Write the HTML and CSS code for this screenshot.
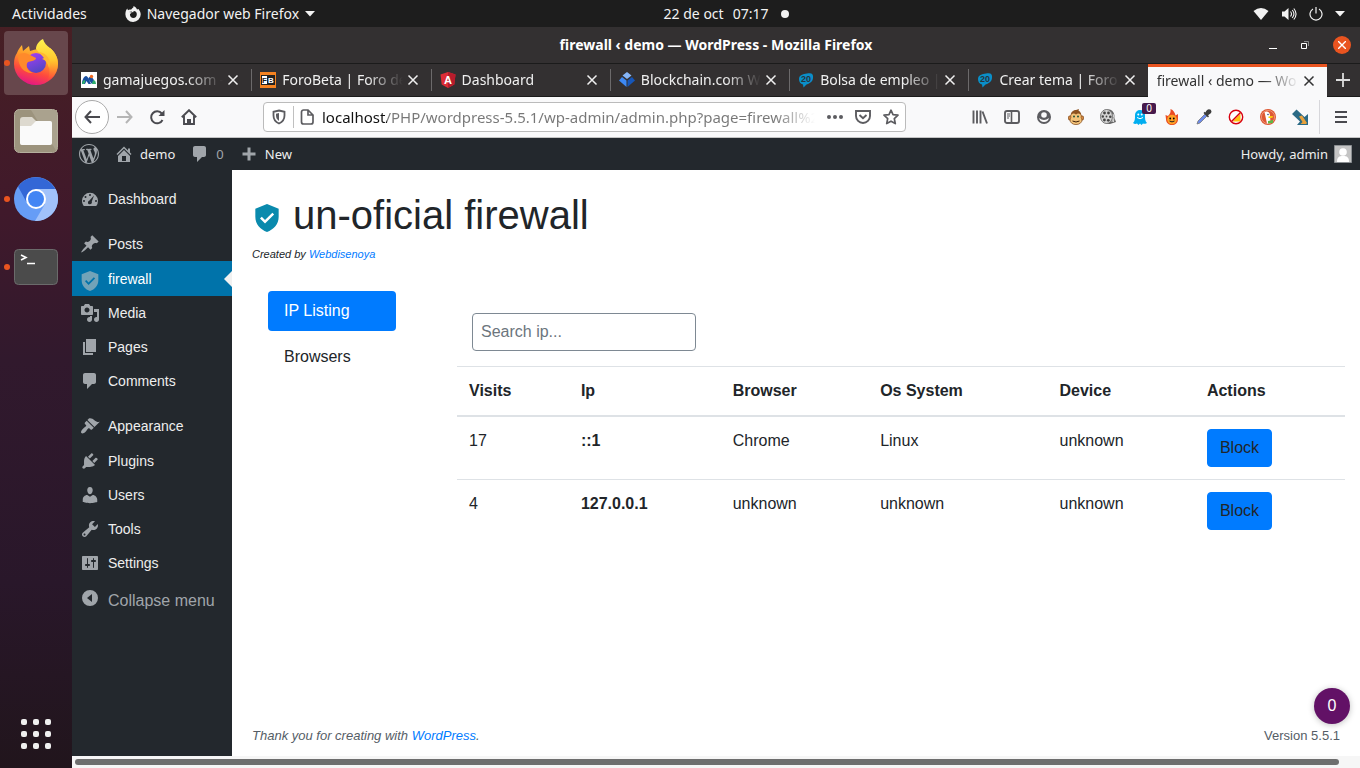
FILE: index.html
```html
<!DOCTYPE html>
<html lang="es">
<head>
<meta charset="utf-8">
<title>firewall ‹ demo — WordPress</title>
<link rel="stylesheet" href="styles.css">
</head>
<body>
<svg class="sprite" aria-hidden="true">
  <symbol id="i-close" viewBox="0 0 12 12"><path d="M1.500 1.500l9 9M10.500 1.500l-9 9" stroke="currentColor" stroke-width="1.500" fill="none"/></symbol>
  <symbol id="i-foro" viewBox="0 0 16 16"><path d="M1 7C1 3 5 2 9 1.500C14 .5 15.500 2 15 6C14.800 9 13 11 8.500 12.500L5.500 15.500L5 12.500C2.500 12 1 10 1 7z" fill="#0a8fc9"/><text class="fav-text" x="3" y="10" font-size="9" fill="#27343d">20</text></symbol>
  <symbol id="i-comment" viewBox="0 0 20 20"><path d="M5 2h9c1.100 0 2 .9 2 2v7c0 1.100-.9 2-2 2h-2l-5 5v-5H5c-1.100 0-2-.9-2-2V4c0-1.100.9-2 2-2z"/></symbol>
  <symbol id="i-shield" viewBox="0 0 24 24"><path fill-rule="evenodd" d="M12 0L2 4V11c0 6.300 4.200 11 10 13 5.800-2 10-6.700 10-13V4zM10.300 16.700L6 12.400l1.500-1.500 2.800 2.800L16.600 7.400l1.500 1.500z"/></symbol>
</svg>

<header class="topbar">
  <div class="topbar-left">
    <button class="plain">Actividades</button>
    <button class="plain app-menu">
      <svg width="16" height="16" viewBox="0 0 16 16"><path fill="currentColor" fill-rule="evenodd" d="M8.500 0c2 1 3 2 3.500 3.500L13.500 3c1.500 2 2.200 3.500 2.200 5.500A7.600 7.600 0 0 1 8 16 7.600 7.600 0 0 1 .4 8.400C.4 6 1 4 2.200 2.500L3 4.200C4 3.500 5 3.400 6 3.700L7.500 2C8.500 1.600 8.500.8 8.500 0zM4 6l3 .5-2 1.500c-.2 2.500 1.300 4 3.300 4 2.200 0 3.500-1.600 3.500-3.700 0-1.700-1-3.300-3-3.300L8 6.500 6.500 5.500z"/></svg>
      <span>Navegador web Firefox</span>
      <svg width="10" height="6" viewBox="0 0 10 6"><path d="M0 0h10L5 5.500z" fill="currentColor"/></svg>
    </button>
  </div>
  <button class="plain clock"><span>22 de oct</span><span>07:17</span><span class="notice-dot"></span></button>
  <div class="topbar-right">
    <svg width="16" height="14" viewBox="0 0 16 14"><path d="M.5 4Q8-2 15.500 4L8 13z" fill="currentColor"/></svg>
    <svg width="16" height="14" viewBox="0 0 16 14"><path d="M1 4.500h2.500L7.500 1v12L3.500 9.500H1z" fill="currentColor"/><path d="M9.500 4.500q2 2.500 0 5M11.200 3q3.500 4 0 8M12.800 1.500q4.500 5.500 0 11" fill="none" stroke="currentColor" stroke-width="1.100"/></svg>
    <svg width="14" height="14" viewBox="0 0 14 14"><path d="M4 1.900a6 6 0 1 0 6 0M7 0v6.500" fill="none" stroke="currentColor" stroke-width="1.200"/></svg>
    <svg width="10" height="6" viewBox="0 0 10 6"><path d="M0 0h10L5 5.500z" fill="currentColor"/></svg>
  </div>
</header>

<div class="desktop">
  <nav class="dock" aria-label="Dock">
    <button class="dock-item running focused" aria-label="Firefox">
      <svg width="48" height="48" viewBox="0 0 48 48">
        <defs>
          <linearGradient id="ffa" x1=".7" y1="0" x2=".35" y2="1"><stop offset="0" stop-color="#ffd23a"/><stop offset=".35" stop-color="#ff9a2a"/><stop offset=".68" stop-color="#ff4a3d"/><stop offset="1" stop-color="#e31587"/></linearGradient>
          <linearGradient id="ffb" x1=".3" y1="0" x2=".7" y2="1"><stop offset="0" stop-color="#a13df2"/><stop offset="1" stop-color="#4d48c0"/></linearGradient>
          <linearGradient id="ffc" x1="0" y1="0" x2="0" y2="1"><stop offset="0" stop-color="#fff44f"/><stop offset=".5" stop-color="#ffc62e"/><stop offset="1" stop-color="#ff6a2e" stop-opacity="0"/></linearGradient>
        </defs>
        <path d="M5 14C6 11 8 8 10 6l1 6 6-5 1 5q8-3 20-3C43 13 46 18 46 25A22 21 0 1 1 2 25C2 20 3 17 5 14z" fill="url(#ffa)"/>
        <path d="M24 10c0-4 3-8 7-10 1 4 4 7 7 9 5 4 8 10 8 16 0 8-5 15-12 18 5-7 4-14 1-19-2-4-6-8-11-14z" fill="url(#ffc)"/>
        <circle cx="24" cy="24" r="10" fill="url(#ffb)"/>
        <path d="M6 17c4-4 7-3 10-2l8 4q0 2-4 3l-4 1c-3 3-1 9 5 11-8 1-15-6-15-17z" fill="#ff8a2b"/>
        <path d="M27 13c8 1 13 8 10 16-1-5-3-8-7-9l2-1z" fill="#ffb931"/>
      </svg>
    </button>
    <button class="dock-item" aria-label="Archivos">
      <svg width="44" height="44" viewBox="0 0 44 44"><rect x=".5" y=".5" width="43" height="43" rx="5" fill="#9c937d" stroke="#b5af9d"/><path d="M17 1h26v42z" fill="#aaa28e"/><path d="M6 11a3 3 0 0 1 3-3h9l4 4h13a3 3 0 0 1 3 3v18a3 3 0 0 1-3 3H9a3 3 0 0 1-3-3z" fill="#ddd9cf"/><path d="M6 17h11l5-5h14a2 2 0 0 1 2 2v20a2 2 0 0 1-2 2H8a2 2 0 0 1-2-2z" fill="#fafafa"/></svg>
    </button>
    <button class="dock-item running" aria-label="Chromium">
      <svg width="44" height="44" viewBox="0 0 44 44"><circle cx="22" cy="22" r="22" fill="#669df6"/><path d="M4 9.500A22 22 0 0 1 40.500 10.500L41 12H22L12.500 25z" fill="#3367d6"/><path d="M22 12h19.600A22 22 0 0 1 21 44l10-17z" fill="#a1c2fa"/><circle cx="22" cy="22" r="10" fill="#fff"/><circle cx="22" cy="22" r="8" fill="#4285f4"/></svg>
    </button>
    <button class="dock-item running" aria-label="Terminal">
      <svg width="44" height="36" viewBox="0 0 44 36"><rect x=".5" y=".5" width="43" height="35" rx="4" fill="#4b4b4b" stroke="#6b6b6b"/><path d="M7 6l5 2.500L7 11M13 14.500h8" stroke="#fff" stroke-width="1.600" fill="none"/></svg>
    </button>
    <button class="dock-item show-apps" aria-label="Mostrar aplicaciones">
      <svg width="30" height="30" viewBox="0 0 30 30" fill="#efefef"><g id="dots"><rect width="6" height="6" rx="2"/><rect x="12" width="6" height="6" rx="2"/><rect x="24" width="6" height="6" rx="2"/></g><use href="#dots" y="12"/><use href="#dots" y="24"/></svg>
    </button>
  </nav>

  <div class="window">
    <div class="titlebar">
      <div class="title">firewall ‹ demo — WordPress - Mozilla Firefox</div>
      <div class="window-buttons">
        <button class="plain" aria-label="Minimizar"><svg width="8" height="8"><path d="M0 7.500h8" stroke="#fff"/></svg></button>
        <button class="plain" aria-label="Restaurar"><svg width="8" height="8"><path d="M.5 2.500h5v5h-5z" fill="none" stroke="#fff"/><path d="M3 .5h4.500V5" fill="none" stroke="#888"/></svg></button>
        <button class="plain close-window" aria-label="Cerrar"><svg width="8" height="8"><path d="M0 0l8 8M8 0L0 8" stroke="#fff" stroke-width="1.400"/></svg></button>
      </div>
    </div>

    <div class="tabs">
      <div class="tab"><button class="plain tab-label"><svg class="fav" viewBox="0 0 16 16"><path fill="#fff" d="M0 0h16v16H0z"/><path d="M1 12C1 8 3 4 5 4s3 4 5 8H7.500L5.500 9 4 12z" fill="#1a4fa0"/><path d="M7 7C9 3 12 5 13 9l-2 3z" fill="#1a4fa0"/><circle cx="10.500" cy="4.500" r="1.700" fill="#f26b21"/><path d="M1 12q.5-4 3-4 1 2-1 4zM11 12q0-3 2-4 2 1 2 4z" fill="#2fae6d"/></svg><span>gamajuegos.com -</span></button><button class="plain tab-close" aria-label="Cerrar pestaña"><svg><use href="#i-close"/></svg></button></div>
      <div class="tab"><button class="plain tab-label"><svg class="fav" viewBox="0 0 16 16"><path fill="#f58220" d="M0 0h16v16H0z"/><path fill="#222" d="M1 3h14v10H1z"/><path fill="#fff" d="M2 4h5v8H2z"/><text class="fav-text" x="2" y="11" font-size="8" fill="#222">F</text><text class="fav-text" x="8" y="11" font-size="8" fill="#fff">B</text></svg><span>ForoBeta | Foro de</span></button><button class="plain tab-close" aria-label="Cerrar pestaña"><svg><use href="#i-close"/></svg></button></div>
      <div class="tab"><button class="plain tab-label"><svg class="fav" viewBox="0 0 16 16"><path fill="#dd2c36" d="M8 0l7.500 2.600-1.200 10L8 16l-6.300-3.400-1.200-10z"/><path fill="#b71c2c" d="M8 0l7.500 2.600-1.200 10L8 16z"/><text class="fav-text" x="8" y="12" text-anchor="middle" font-size="11" fill="#fff">A</text></svg><span>Dashboard</span></button><button class="plain tab-close" aria-label="Cerrar pestaña"><svg><use href="#i-close"/></svg></button></div>
      <div class="tab"><button class="plain tab-label"><svg class="fav" viewBox="0 0 16 16"><path fill="#85b5f8" d="M8 0l4.500 3.500L8 7 3.500 3.500z"/><path fill="#3d89f5" d="M3 5l4.500 3.500V15L0 8.500z"/><path fill="#1656b9" d="M13 5l3 3.500-7.500 6.500V8.500z"/></svg><span>Blockchain.com W</span></button><button class="plain tab-close" aria-label="Cerrar pestaña"><svg><use href="#i-close"/></svg></button></div>
      <div class="tab"><button class="plain tab-label"><svg class="fav"><use href="#i-foro"/></svg><span>Bolsa de empleo |</span></button><button class="plain tab-close" aria-label="Cerrar pestaña"><svg><use href="#i-close"/></svg></button></div>
      <div class="tab"><button class="plain tab-label"><svg class="fav"><use href="#i-foro"/></svg><span>Crear tema | Foro</span></button><button class="plain tab-close" aria-label="Cerrar pestaña"><svg><use href="#i-close"/></svg></button></div>
      <div class="tab active"><button class="plain tab-label"><span>firewall ‹ demo — Wo</span></button><button class="plain tab-close" aria-label="Cerrar pestaña"><svg><use href="#i-close"/></svg></button></div>
      <button class="plain new-tab" aria-label="Nueva pestaña"><svg width="14" height="14"><path d="M7 0v14M0 7h14" stroke="#ddd" stroke-width="1.800"/></svg></button>
    </div>

    <div class="toolbar">
      <div class="nav-buttons">
        <button class="plain back" aria-label="Atrás"><svg width="16" height="16" viewBox="0 0 16 16" fill="none" stroke="#4a4a4f" stroke-width="2"><path d="M7 2L1.500 8 7 14M1.500 8H16"/></svg></button>
        <button class="plain tool" aria-label="Adelante"><svg width="16" height="16" viewBox="0 0 16 16" fill="none" stroke="#b5b5b5" stroke-width="2"><path d="M9 2l5.500 6L9 14M14.500 8H0"/></svg></button>
        <button class="plain tool" aria-label="Recargar"><svg width="16" height="16" viewBox="0 0 16 16"><path d="M12.800 4.500A6 6 0 1 0 13.500 11" fill="none" stroke="#4a4a4f" stroke-width="2"/><path d="M15.500 1v6h-6z" fill="#4a4a4f"/></svg></button>
        <button class="plain tool" aria-label="Inicio"><svg width="16" height="16" viewBox="0 0 16 16"><path d="M.8 8.300L8 1.200l7.200 7.100M3 7v8h10V7" fill="none" stroke="#4a4a4f" stroke-width="1.900"/><path d="M6 15v-5h4v5z" fill="#4a4a4f"/></svg></button>
      </div>
      <div class="urlbar">
        <button class="plain" aria-label="Protección"><svg width="14" height="16" viewBox="0 0 14 16"><path d="M7 1.500l5.500 1.300v3.700c0 4-2 6.500-5.500 8-3.500-1.500-5.500-4-5.500-8V2.800z" fill="none" stroke="#5c5c60" stroke-width="1.800"/><path d="M7 4v8c-2-1.500-3-3-3-5.500V4.700z" fill="#5c5c60"/></svg></button>
        <span class="url-sep"></span>
        <svg width="14" height="16" viewBox="0 0 14 16"><path d="M1.500 3A2 2 0 0 1 3.500 1H8l5 5v7a2 2 0 0 1-2 2H3.500a2 2 0 0 1-2-2zM8 1v5h5" fill="none" stroke="#5c5c60" stroke-width="1.700"/></svg>
        <input class="url" type="text" aria-label="Dirección" value="localhost/PHP/wordpress-5.5.1/wp-admin/admin.php?page=firewall%2">
        <button class="plain" aria-label="Más acciones"><svg width="16" height="16" fill="#5c5c60"><circle cx="2" cy="8" r="2"/><circle cx="8" cy="8" r="2"/><circle cx="14" cy="8" r="2"/></svg></button>
        <button class="plain" aria-label="Pocket"><svg width="16" height="16" viewBox="0 0 16 16" fill="none" stroke="#5c5c60" stroke-width="1.900"><path d="M1 2h14v5a7 7 0 0 1-14 0zM4.500 6L8 9.300 11.500 6"/></svg></button>
        <button class="plain" aria-label="Marcador"><svg width="16" height="16" viewBox="0 0 16 16"><path d="M8 1.200l2 4.500 5 .5-3.700 3.400 1 5L8 12.200l-4.300 2.400 1-5L1 6.200l5-.5z" fill="none" stroke="#5c5c60" stroke-width="1.700" stroke-linejoin="round"/></svg></button>
      </div>
      <div class="extensions">
        <button class="plain tool" aria-label="Biblioteca"><svg width="16" height="16" stroke="#5c5c60" stroke-width="1.900"><path d="M1.500 1.500v13M5 1.500v13M8.500 1.500v13M10.500 2.500l4.500 12"/></svg></button>
        <button class="plain tool" aria-label="Barra lateral"><svg width="16" height="16" fill="none" stroke="#5c5c60"><rect x="1" y="2" width="14" height="12" rx="2" stroke-width="1.900"/><path d="M7.500 2v12" stroke-width="1.600"/><path d="M3 5h3M3 7h3M3 9h2"/></svg></button>
        <button class="plain tool" aria-label="Cuenta"><svg width="16" height="16"><circle cx="8" cy="8" r="7" fill="#5c5c60"/><circle cx="8" cy="6" r="2.800" fill="#f9f9fa"/><path d="M3 9q5 4 10 0-1 4-5 4t-5-4z" fill="#f9f9fa"/></svg></button>
        <button class="plain tool" aria-label="Greasemonkey"><svg width="16" height="16"><circle cx="2.500" cy="9" r="2.300" fill="#d58b45" stroke="#7d4312" stroke-width=".7"/><circle cx="13.500" cy="9" r="2.300" fill="#d58b45" stroke="#7d4312" stroke-width=".7"/><path d="M2.500 8C2.500 3 5 1 8 1l3-1-.5 1.500C13 3 13.500 5 13.500 8z" fill="#8d5220"/><ellipse cx="8" cy="11" rx="6" ry="4.600" fill="#f4c47b" stroke="#7d4312" stroke-width=".7"/><circle cx="5.700" cy="7" r="2.600" fill="#f4c47b"/><circle cx="10.300" cy="7" r="2.600" fill="#f4c47b"/><circle cx="6" cy="7.500" r="1" fill="#24543a"/><circle cx="10" cy="7.500" r="1" fill="#24543a"/><path d="M4.500 12q3.500 2 7 0" fill="none" stroke="#3c1d05"/></svg></button>
        <button class="plain tool" aria-label="Vídeo"><svg width="16" height="16"><path d="M6 .5h4q5 2 4.500 8.500l1.500 4-6 2H6z" fill="#666"/><path d="M11 3q3 4 1 10M13 5q1.500 3 .5 8" stroke="#ddd" fill="none"/><ellipse cx="6.500" cy="7.500" rx="6" ry="7" fill="#d5d5d5" stroke="#777"/><g fill="#444"><circle cx="4.500" cy="4" r="1.400"/><circle cx="8.500" cy="4" r="1.400"/><circle cx="10.300" cy="7.700" r="1.300"/><circle cx="8.300" cy="11.300" r="1.400"/><circle cx="4.400" cy="11" r="1.400"/><circle cx="2.800" cy="7.500" r="1.200"/><circle cx="6.500" cy="7.500" r=".9"/></g></svg></button>
        <button class="plain tool ghostery" aria-label="Ghostery"><svg width="16" height="16"><path d="M3 6a5 5 0 0 1 10 0c0 4 0 6 2 8-2 1-3 1-4 .5L9.500 16 8 14.500 6.500 16 5 14.500q-2 1-4-.5C3 12 3 10 3 6z" fill="#00aef0"/><circle cx="6.300" cy="5.500" r="1" fill="#fff"/><circle cx="9.700" cy="5.500" r="1" fill="#fff"/><path d="M5 8.500q3 2.500 6 0" fill="none" stroke="#fff"/></svg><span class="count">0</span></button>
        <button class="plain tool" aria-label="Hot"><svg width="16" height="16"><path d="M2 10l-.5-4L4 7c2-2 3-4 2.500-7 3 1 4.500 4 5 6.500L14 5v5c0 4-3 6-6 6s-6-2-6-6z" fill="#ea4b22"/><circle cx="8" cy="10.500" r="4.800" fill="#ffa126"/><circle cx="6.200" cy="9.500" r=".9"/><circle cx="9.800" cy="9.500" r=".9"/><path d="M5.500 12q2.500 1.800 5 0" fill="none" stroke="#222"/></svg></button>
        <button class="plain tool" aria-label="Cuentagotas"><svg width="16" height="16"><path d="M9 5l2 2-7 7-3 1 1-3z" fill="#6c8bec" stroke="#777" stroke-width=".8"/><path d="M7.500 4l4.500 4.500 1-1.200-1-1c2-1 3.500-2.500 3.500-3.700A2.500 2.500 0 0 0 13 .3c-1.500 0-3 1.700-3.500 3.300l-.8-.8z" fill="#3d3d3d"/></svg></button>
        <button class="plain tool" aria-label="Bloqueador"><svg width="16" height="16"><circle cx="8" cy="8" r="6.700" fill="#fff"/><path d="M4.500 12.500L12.500 4.500v8z" fill="#ffc20e"/><circle cx="8" cy="8" r="6.700" fill="none" stroke="#d8000f" stroke-width="1.400"/><path d="M3.500 12.500l9-9" stroke="#d8000f" stroke-width="1.400"/></svg></button>
        <button class="plain tool" aria-label="DuckDuckGo"><svg width="16" height="16"><circle cx="8" cy="8" r="8" fill="#de5833"/><circle cx="8" cy="8" r="6.600" fill="none" stroke="#f6b7a3" stroke-width=".6"/><path d="M4.500 3C7 1.500 10 3 10 6.500L10.500 14 7 14.500z" fill="#fff"/><path d="M8.500 7.500q3-1 5 0-1 2-5 1.500z" fill="#fcd20a"/><path d="M8 12l5-1v3l-5 .5z" fill="#5fb947"/><circle cx="8" cy="5.500" r=".8" fill="#2d4f8e"/></svg></button>
        <button class="plain tool" aria-label="Descargas"><svg width="16" height="16"><path d="M4.500 .5L12.500 8 16 5v11H5L8 12.500 0 5z" fill="#2b6a85"/><path d="M7 7.500l3-1 5 7.500-1 1H8.500l2-2z" fill="#e9a13b"/></svg></button>
        <span class="tool-sep"></span>
        <button class="plain menu-button" aria-label="Menú"><svg width="12" height="14"><path d="M0 2h12M0 7h12M0 12h12" stroke="#4a4a4f" stroke-width="2"/></svg></button>
      </div>
    </div>

    <div class="adminbar">
      <a href="#" class="wp-logo" aria-label="WordPress"><svg class="dash" viewBox="0 0 20 20"><path d="M20 10c0-5.510-4.490-10-10-10C4.480 0 0 4.490 0 10c0 5.520 4.480 10 10 10 5.510 0 10-4.480 10-10zM7.780 15.370L4.370 6.220c.55-.02 1.170-.08 1.170-.08.5-.06.44-1.130-.06-1.110 0 0-1.450.11-2.370.11-.18 0-.37 0-.58-.01C4.120 2.690 6.870 1.110 10 1.110c2.330 0 4.450.87 6.050 2.340-.68-.11-1.650.39-1.650 1.580 0 .74.45 1.360.9 2.100.35.61.55 1.360.55 2.460 0 1.490-1.400 5-1.400 5l-3.030-8.370c.54-.02.82-.17.82-.17.5-.05.44-1.250-.06-1.220 0 0-1.440.12-2.380.12-.87 0-2.330-.12-2.330-.12-.5-.03-.56 1.200-.06 1.220l.92.08 1.260 3.410zM17.410 10c.24-.64.74-1.870.43-4.250.7 1.290 1.050 2.710 1.050 4.250 0 3.290-1.730 6.240-4.400 7.780.97-2.590 1.940-5.200 2.920-7.780zM6.100 18.090C3.120 16.650 1.110 13.530 1.110 10c0-1.300.23-2.480.72-3.590C3.250 10.300 4.670 14.200 6.100 18.090zm4.030-6.630l2.580 6.980c-.86.29-1.760.45-2.710.45-.79 0-1.570-.11-2.290-.33.81-2.380 1.620-4.740 2.420-7.100z"/></svg></a>
      <a href="#"><svg class="dash" viewBox="0 0 20 20"><path d="M16 8.500l1.530 1.530-1.060 1.060L10 4.600l-6.470 6.490-1.060-1.060L10 2.500l4 4v-2h2v4zm-6-2.460l6 5.990V18H4v-5.970zM12 17v-5H8v5h4z"/></svg>demo</a>
      <a href="#" class="muted"><svg class="dash"><use href="#i-comment"/></svg>0</a>
      <a href="#"><svg class="dash" viewBox="0 0 20 20"><path d="M8.500 3.500h3v5h5v3h-5v5h-3v-5h-5v-3h5z"/></svg>New</a>
      <a href="#" class="account">Howdy, admin<svg width="18" height="18" viewBox="0 0 18 18"><path fill="#c4c4c4" stroke="#8b8f92" d="M.5.5h17v17H.5z"/><circle cx="9" cy="7" r="3.800" fill="#fff"/><path d="M3 17c0-5 2-6 6-6s6 1 6 6z" fill="#fff"/></svg></a>
    </div>

    <div class="admin">
      <nav class="side" aria-label="Menú principal">
        <a href="#"><svg class="dash" viewBox="0 0 20 20"><path fill-rule="evenodd" d="M3.760 17h12.480A8 8 0 0 0 18 11.800 8 8 0 0 0 2 11.800C2 13.760 2.660 15.550 3.760 17zM10 5a1 1 0 1 1 0 2 1 1 0 0 1 0-2zM5.500 7a1 1 0 1 1 0 2 1 1 0 0 1 0-2zM4 11a1 1 0 1 1 0 2 1 1 0 0 1 0-2zM16 11a1 1 0 1 1 0 2 1 1 0 0 1 0-2zM14 6.500l-2.200 6c.4 1.700-.5 2.800-1.800 2.800-2.600 0-2.500-2.900-.8-3.600z"/></svg>Dashboard</a>
        <hr>
        <a href="#"><svg class="dash" viewBox="0 0 20 20"><path d="M10.440 3.020l1.820-1.820 6.360 6.350-1.830 1.820c-1.050-.68-2.480-.57-3.410.36l-.75.75c-.92.93-1.040 2.350-.35 3.410l-1.830 1.820-2.410-2.410-2.800 2.790c-.42.42-3.380 2.710-3.800 2.290s1.860-3.390 2.280-3.810l2.790-2.790L4.100 9.360l1.830-1.820c1.050.69 2.480.57 3.400-.36l.75-.75c.93-.92 1.050-2.350.36-3.410z"/></svg>Posts</a>
        <a href="#" class="current" aria-current="page"><svg class="dash shield"><use href="#i-shield"/></svg>firewall</a>
        <a href="#"><svg class="dash" viewBox="0 0 20 20"><path d="M13 11V4c0-.55-.45-1-1-1h-1.670L9 1H5L3.670 3H2c-.55 0-1 .45-1 1v7c0 .55.45 1 1 1h10c.55 0 1-.45 1-1zM7 4.500c1.380 0 2.500 1.120 2.500 2.500S8.380 9.500 7 9.500 4.500 8.380 4.500 7 5.620 4.500 7 4.500zM14 6h5v10.500c0 1.380-1.120 2.500-2.500 2.500S14 17.880 14 16.500s1.120-2.500 2.500-2.500c.17 0 .34.02.5.05V9h-3V6zm-4 8.050V13h2v3.500c0 1.380-1.120 2.500-2.500 2.500S7 17.880 7 16.500 8.120 14 9.500 14c.17 0 .34.02.5.05z"/></svg>Media</a>
        <a href="#"><svg class="dash" viewBox="0 0 20 20"><path d="M6 15V2h10v13H6zm-1 1h8v2H3V5h2v11z"/></svg>Pages</a>
        <a href="#"><svg class="dash"><use href="#i-comment"/></svg>Comments</a>
        <hr>
        <a href="#"><svg class="dash" viewBox="0 0 20 20"><path d="M14.480 11.060L7.410 3.990l1.500-1.500c.5-.56 2.300-.47 3.510.32 1.210.8 1.430 1.280 2.910 2.100 1.180.64 2.450 1.260 4.450.85zm-.71.71L6.700 4.700 4.930 6.470c-.39.39-.39 1.020 0 1.410l1.060 1.060c.39.39.39 1.030 0 1.420-.6.6-1.430 1.110-2.210 1.690-.35.26-.7.53-1.010.84C1.430 14.230.4 16.080 1.400 17.070c.99 1 2.840-.03 4.180-1.360.31-.31.58-.66.85-1.020.57-.78 1.080-1.610 1.690-2.210.39-.39 1.020-.39 1.410 0l1.060 1.060c.39.39 1.020.39 1.410 0z"/></svg>Appearance</a>
        <a href="#" class="tall"><svg class="dash" viewBox="0 0 20 20"><path d="M13.110 4.360L9.870 7.600 8 5.730l3.240-3.240c.35-.34 1.050-.2 1.560.32.52.51.66 1.210.31 1.550zm-8 1.770l.91-1.120 9.010 9.010-1.190.84c-.71.71-2.630 1.160-3.820 1.160H6.140L4.900 17.260c-.59.59-1.540.59-2.120 0-.59-.58-.59-1.530 0-2.120l1.240-1.240v-3.880c0-1.130.4-3.190 1.090-3.890zm7.260 3.970l3.240-3.240c.34-.35 1.040-.21 1.550.31.52.51.66 1.210.31 1.550l-3.240 3.250z"/></svg>Plugins</a>
        <a href="#"><svg class="dash" viewBox="0 0 20 20"><path d="M10 9.250c-2.270 0-2.730-3.440-2.730-3.440C7 4.020 7.820 2 9.970 2c2.160 0 2.980 2.020 2.710 3.810 0 0-.41 3.440-2.680 3.440zm0 2.570L12.720 10c2.390 0 4.520 2.330 4.520 4.530v2.490s-3.650 1.130-7.240 1.130c-3.650 0-7.240-1.130-7.240-1.130v-2.490c0-2.250 1.940-4.480 4.470-4.480z"/></svg>Users</a>
        <a href="#"><svg class="dash" viewBox="0 0 20 20"><path d="M16.680 9.770c-1.340 1.340-3.300 1.670-4.950.99l-5.410 6.520c-.99.99-2.590.99-3.580 0s-.99-2.590 0-3.570l6.520-5.420c-.68-1.650-.35-3.610.99-4.950 1.280-1.280 3.120-1.620 4.720-1.060l-2.890 2.890 2.820 2.820 2.860-2.870c.53 1.580.18 3.390-1.080 4.650zM3.810 16.210c.4.39 1.040.39 1.430 0 .4-.4.4-1.040 0-1.430-.39-.4-1.030-.4-1.430 0-.39.39-.39 1.030 0 1.430z"/></svg>Tools</a>
        <a href="#"><svg class="dash" viewBox="0 0 20 20"><path d="M18 16V4c0-.55-.45-1-1-1H3c-.55 0-1 .45-1 1v12c0 .55.45 1 1 1h14c.55 0 1-.45 1-1zM8 11h1c.55 0 1 .45 1 1s-.45 1-1 1H8v1.500c0 .28-.22.5-.5.5s-.5-.22-.5-.5V13H6c-.55 0-1-.45-1-1s.45-1 1-1h1V5.500c0-.28.22-.5.5-.5s.5.22.5.5V11zm5-2h-1c-.55 0-1-.45-1-1s.45-1 1-1h1V5.500c0-.28.22-.5.5-.5s.5.22.5.5V7h1c.55 0 1 .45 1 1s-.45 1-1 1h-1v5.500c0 .28-.22.5-.5.5s-.5-.22-.5-.5V9z"/></svg>Settings</a>
        <button class="plain collapse"><svg class="dash" viewBox="0 0 20 20"><path fill-rule="evenodd" d="M10 2a8 8 0 1 1 0 16 8 8 0 0 1 0-16zm2 4v8l-5-4z"/></svg>Collapse menu</button>
      </nav>

      <main class="content">
        <h1><svg width="28" height="28" viewBox="0 0 24 24"><use href="#i-shield"/></svg>un-oficial firewall</h1>
        <p class="byline">Created by <a href="#">Webdisenoya</a></p>
        <div class="panel">
          <nav class="pills" aria-label="Secciones">
            <a href="#" class="on">IP Listing</a>
            <a href="#">Browsers</a>
          </nav>
          <section class="listing">
            <input class="search" type="text" placeholder="Search ip..." aria-label="Search ip">
            <table>
              <thead><tr><th class="c-visits">Visits</th><th class="c-ip">Ip</th><th class="c-browser">Browser</th><th class="c-os">Os System</th><th class="c-device">Device</th><th>Actions</th></tr></thead>
              <tbody>
                <tr><td>17</td><th>::1</th><td>Chrome</td><td>Linux</td><td>unknown</td><td><button class="block">Block</button></td></tr>
                <tr><td>4</td><th>127.0.0.1</th><td>unknown</td><td>unknown</td><td>unknown</td><td><button class="block">Block</button></td></tr>
              </tbody>
            </table>
          </section>
        </div>
        <footer class="foot">
          <p><em>Thank you for creating with <a href="#">WordPress</a>.</em></p>
          <p>Version 5.5.1</p>
        </footer>
        <button class="bubble">0</button>
      </main>
    </div>
    <div class="scrollbar"><div class="thumb"></div></div>
  </div>
</div>
</body>
</html>
```
FILE: styles.css
```css
* { box-sizing: border-box; }

body {
  margin: 0;
  min-height: 100vh;
  display: flex;
  flex-direction: column;
  font-family: "Liberation Sans", Arial, sans-serif;
  font-size: 16px;
  line-height: 24px;
  color: #212529;
}

p, h1 { margin: 0; }
a { color: #007bff; text-decoration: none; }
svg { flex: none; }
.sprite { position: absolute; width: 0; height: 0; }

.plain {
  display: flex;
  align-items: center;
  justify-content: center;
  padding: 0;
  border: 0;
  background: none;
  color: inherit;
  font: inherit;
}

/* System bar */
.topbar {
  display: grid;
  grid-template-columns: 1fr auto 1fr;
  align-items: center;
  height: 27px;
  padding: 0 15px 0 12px;
  background: #1d1d1d;
  color: #f2f2f2;
  font: 14px/20px "Noto Sans", sans-serif;
}
.topbar-left, .topbar-right { display: flex; align-items: center; }
.topbar-left { gap: 38px; }
.topbar-right { gap: 12px; justify-content: flex-end; }
.app-menu { gap: 6px; }
.clock { gap: 9px; padding-left: 96px; }
.notice-dot { width: 8px; height: 8px; margin-left: 4px; border-radius: 50%; background: #f2f2f2; }

.desktop { flex: 1; display: flex; }

/* Dock */
.dock {
  flex: none;
  display: flex;
  flex-direction: column;
  align-items: center;
  gap: 4px;
  width: 72px;
  padding: 4px 0 2px;
  background: linear-gradient(#471f24, #40192b 25%, #31192d 45%, #29172a 75%, #21151c);
}
.dock-item {
  position: relative;
  display: flex;
  align-items: center;
  justify-content: center;
  width: 64px;
  height: 64px;
  padding: 0;
  border: 0;
  border-radius: 4px;
  background: none;
}
.focused { background: #67474c; }
.running::before {
  content: "";
  position: absolute;
  left: 0;
  top: 29px;
  width: 6px;
  height: 6px;
  border-radius: 50%;
  background: #e95420;
}
.show-apps { margin-top: auto; }

/* Browser window */
.window { flex: 1; min-width: 0; display: flex; flex-direction: column; }
.titlebar {
  display: grid;
  grid-template-columns: 1fr auto 1fr;
  align-items: center;
  height: 37px;
  border-bottom: 1px solid #1b1b1b;
  background: #333031;
  color: #fff;
  font: 700 14px/20px "Noto Sans", sans-serif;
}
.title { grid-column: 2; }
.window-buttons { display: flex; justify-content: flex-end; align-items: center; gap: 24px; padding-right: 9px; }
.window-buttons .close-window { width: 18px; height: 18px; border-radius: 50%; background: #e95420; }

.tabs {
  display: flex;
  height: 33px;
  background: #333031;
  color: #f0f0f0;
  font: 14px/20px "Noto Sans", sans-serif;
  border-bottom: 1px solid #1b1b1b;
}
.tab {
  position: relative;
  flex: 1;
  min-width: 0;
  display: flex;
  align-items: center;
  padding: 0 12px 0 9px;
}
.tab + .tab::before {
  content: "";
  position: absolute;
  left: 0;
  top: 5px;
  bottom: 5px;
  width: 1px;
  background: #6c6a6b;
}
.tab-label { flex: 1; min-width: 0; justify-content: flex-start; gap: 6px; }
.tab-label span {
  flex: 1;
  min-width: 0;
  white-space: nowrap;
  text-align: left;
  -webkit-mask-image: linear-gradient(to left, transparent, #000 36px);
  mask-image: linear-gradient(to left, transparent, #000 36px);
}
.fav { width: 16px; height: 16px; }
.fav-text { font-family: "Liberation Sans", Arial, sans-serif; font-weight: 700; }
.tab-close { width: 12px; margin-left: 4px; }
.tab-close svg { width: 12px; height: 12px; }
.tab.active { margin-bottom: -1px; border-top: 3px solid #e95420; background: #f9f9fa; color: #333; padding-bottom: 3px; }
.tab.active::before { display: none; }
.new-tab { width: 33px; }

.toolbar {
  display: flex;
  align-items: center;
  gap: 58px;
  height: 41px;
  padding: 0 13px 0 3px;
  border-bottom: 1px solid #c4c4c4;
  background: #f9f9fa;
}
.nav-buttons, .extensions { display: flex; align-items: center; }
.back { width: 34px; height: 34px; border: 1px solid #aaa; border-radius: 50%; background: #fff; }
.tool { width: 32px; height: 32px; }
.urlbar {
  flex: 1;
  min-width: 0;
  display: flex;
  align-items: center;
  gap: 12px;
  height: 30px;
  padding: 0 6px 0 8px;
  border: 1px solid #bbb;
  border-radius: 4px;
  background: #fff;
}
.urlbar > svg { margin-left: -6px; }
.url-sep { width: 1px; height: 22px; margin-left: -5px; background: #c0c0c0; }
.url {
  flex: 1;
  min-width: 0;
  margin-left: -4px;
  padding: 0;
  border: 0;
  outline: 0;
  background: linear-gradient(to right, #111 65px, #777 65px, #777 calc(100% - 40px), transparent);
  -webkit-background-clip: text;
  background-clip: text;
  color: transparent;
  font: 15px/22px "Noto Sans", sans-serif;
}
.ghostery { position: relative; }
.count {
  position: absolute;
  left: 18px;
  top: 2px;
  width: 14px;
  border-radius: 2px;
  background: #471a4c;
  color: #fff;
  font: 10px/11px "Noto Sans", sans-serif;
}
.tool-sep { width: 1px; height: 34px; margin: 0 15px 0 3px; background: #d7d7db; }

/* WordPress bar */
.adminbar {
  display: flex;
  align-items: center;
  gap: 15px;
  height: 32px;
  padding: 0 8px 0 7px;
  background: #23282d;
  font: 13px/20px "Noto Sans", sans-serif;
}
.adminbar a { display: flex; align-items: center; gap: 6px; color: #eee; }
.adminbar .muted { color: #a0a5aa; }
.adminbar .account { margin-left: auto; }
.dash { width: 20px; height: 20px; fill: #a0a5aa; }

.admin { flex: 1; display: flex; background: #fff; }
.side {
  flex: none;
  display: flex;
  flex-direction: column;
  width: 160px;
  padding-top: 12px;
  background: #23282d;
  font-size: 14px;
}
.side a, .collapse {
  position: relative;
  display: flex;
  align-items: center;
  gap: 8px;
  height: 34px;
  padding-left: 8px;
  color: #eee;
}
.side hr { width: 100%; height: 11px; margin: 0; border: 0; }
.side .tall { height: 35px; }
.side .current { height: 35px; background: #0073aa; color: #fff; }
.side .current::after {
  content: "";
  position: absolute;
  right: 0;
  top: 10px;
  border: 8px solid transparent;
  border-left: 0;
  border-right-color: #f1f1f1;
}
.side .shield { height: 22px; margin-top: 4px; fill: #72a3b8; }
.side .collapse { height: 42px; justify-content: flex-start; color: #a0a5aa; font-size: 16px; }
.collapse svg { margin-bottom: 6px; }

.content {
  position: relative;
  flex: 1;
  min-width: 0;
  display: flex;
  flex-direction: column;
  padding: 21px 15px 8px 20px;
}
h1 { display: flex; align-items: center; gap: 12px; font-size: 40px; line-height: 48px; font-weight: 400; }
h1 svg { margin: 6px 0 0 1px; fill: #0a8aad; }
.byline { padding-top: 3px; font-size: 11px; font-style: italic; }
.panel { display: flex; gap: 61px; padding: 25px 0 0 16px; }
.pills { flex: none; display: flex; flex-direction: column; gap: 6px; width: 128px; }
.pills a { padding: 8px 16px; border-radius: 4px; color: #212529; }
.pills .on { background: #007bff; color: #fff; }
.listing { flex: 1; min-width: 0; padding-top: 22px; }
.search {
  display: block;
  width: 224px;
  height: 38px;
  margin: 0 15px 15px;
  padding: 0 8px;
  border: 1px solid #7e8993;
  border-radius: 4px;
  font: 16px/24px "Liberation Sans", Arial, sans-serif;
}
.search::placeholder { color: #6c757d; opacity: 1; }

table { width: 100%; border-collapse: separate; border-spacing: 0; table-layout: fixed; }
th, td { padding: 12px; border-top: 1px solid #dee2e6; text-align: left; vertical-align: top; }
thead th { border-bottom: 2px solid #dee2e6; }
tbody tr:first-child > * { border-top: 0; }
.c-visits { width: 12.6%; }
.c-ip { width: 17.1%; }
.c-browser { width: 16.6%; }
.c-os { width: 20.2%; }
.c-device { width: 16.6%; }
.block {
  display: block;
  padding: 6px 12px;
  border: 1px solid #007bff;
  border-radius: 4px;
  background: #007bff;
  color: #212529;
  font: inherit;
}

.foot { display: flex; justify-content: space-between; margin-top: auto; padding-right: 5px; color: #555d66; font-size: 13px; }
.bubble {
  position: absolute;
  right: 10px;
  bottom: 32px;
  width: 36px;
  height: 36px;
  padding: 0;
  border: 0;
  border-radius: 50%;
  background: #621166;
  color: #fff;
  font: 16px/36px "Liberation Sans", Arial, sans-serif;
  box-shadow: 0 1px 6px rgba(0, 0, 0, .25);
}

.scrollbar { height: 12px; padding: 3px 21px 3px 3px; background: #f6f6f6; }
.thumb { height: 6px; border-radius: 3px; background: #6e6e6e; }
```
